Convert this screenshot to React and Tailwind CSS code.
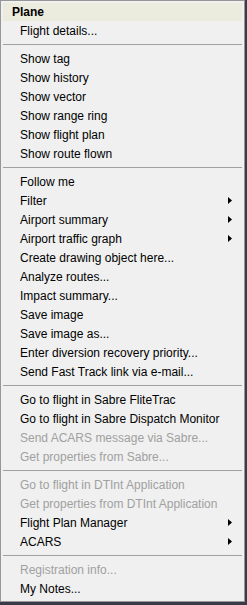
const sections = [
  [{ label: "Flight details..." }],
  [
    { label: "Show tag" },
    { label: "Show history" },
    { label: "Show vector" },
    { label: "Show range ring" },
    { label: "Show flight plan" },
    { label: "Show route flown" },
  ],
  [
    { label: "Follow me" },
    { label: "Filter", sub: true },
    { label: "Airport summary", sub: true },
    { label: "Airport traffic graph", sub: true },
    { label: "Create drawing object here..." },
    { label: "Analyze routes..." },
    { label: "Impact summary..." },
    { label: "Save image" },
    { label: "Save image as..." },
    { label: "Enter diversion recovery priority..." },
    { label: "Send Fast Track link via e-mail..." },
  ],
  [
    { label: "Go to flight in Sabre FliteTrac" },
    { label: "Go to flight in Sabre Dispatch Monitor" },
    { label: "Send ACARS message via Sabre...", off: true },
    { label: "Get properties from Sabre...", off: true },
  ],
  [
    { label: "Go to flight in DTInt Application", off: true },
    { label: "Get properties from DTInt Application", off: true },
    { label: "Flight Plan Manager", sub: true },
    { label: "ACARS", sub: true },
  ],
  [{ label: "Registration info...", off: true }, { label: "My Notes..." }],
];

function Item({ label, sub, off }) {
  return (
    <div
      className={`flex h-[19px] items-center pl-[18px] pr-[10px] ${
        off ? "text-[#a0a0a0]" : "text-black"
      }`}
    >
      <span className="flex-1 whitespace-nowrap">{label}</span>
      {sub && (
        <svg width="4" height="7" viewBox="0 0 4 7" className="mr-[1px]">
          <path d="M0 0 L4 3.5 L0 7 Z" fill="#000" />
        </svg>
      )}
    </div>
  );
}

function Separator() {
  return (
    <div className="flex h-[9px] items-center px-[1px]">
      <div className="h-0 w-full border-t border-[#a0a0a0]" />
    </div>
  );
}

export default function App() {
  return (
    <div className="h-[605px] w-[247px] bg-[#3a3a48]">
      <div
        className="h-[602px] w-[245px] border border-[#979797] bg-[#f0f0f0] p-[1px] text-[12px] leading-none"
        style={{ fontFamily: '"Liberation Sans", Arial, sans-serif' }}
      >
        <div className="mx-[1px] mt-[1px] flex h-[18px] items-center bg-[#ebebde] pl-[9px] font-bold">
          Plane
        </div>
        {sections.map((items, i) => (
          <div key={i}>
            {i > 0 && <Separator />}
            {items.map((it) => (
              <Item key={it.label} {...it} />
            ))}
          </div>
        ))}
      </div>
    </div>
  );
}
